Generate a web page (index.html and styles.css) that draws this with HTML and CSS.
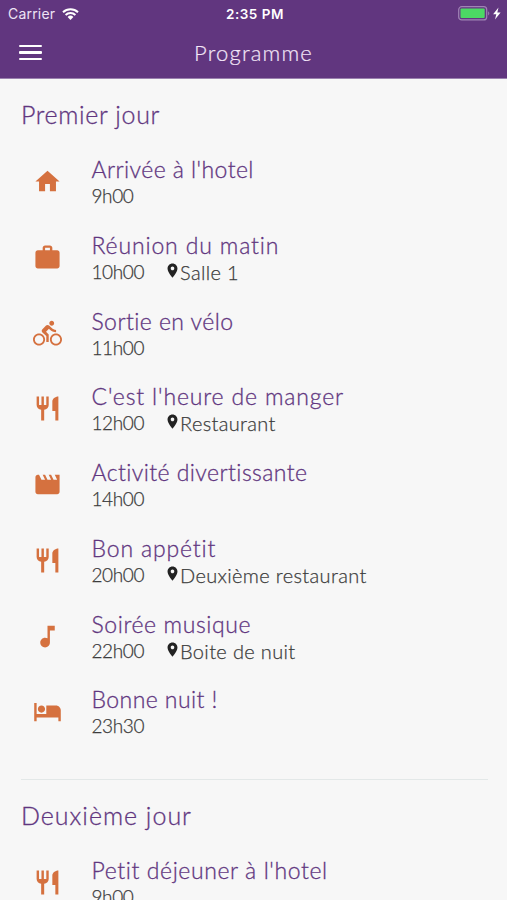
FILE: index.html
```
<!DOCTYPE html>
<html lang="fr">
<head>
    <meta charset="UTF-8">
    <meta name="viewport" content="width=device-width, initial-scale=1.0">
    <title>Programme</title>
    <link rel="stylesheet" href="styles.css">
</head>
<body>
    <svg class="sprite" aria-hidden="true">
        <symbol id="home" viewBox="0 0 24 24"><path d="M10 20v-6h4v6h5v-8h3L12 3 2 12h3v8z"/></symbol>
        <symbol id="work" viewBox="0 0 24 24"><path d="M20 6h-4V4c0-1.11-.89-2-2-2h-4c-1.11 0-2 .89-2 2v2H4c-1.11 0-1.99.89-1.99 2L2 19c0 1.11.89 2 2 2h16c1.11 0 2-.89 2-2V8c0-1.11-.89-2-2-2zm-6 0h-4V4h4v2z"/></symbol>
        <symbol id="bike" viewBox="0 0 24 24"><path d="M15.5 5.5c1.1 0 2-.9 2-2s-.9-2-2-2-2 .9-2 2 .9 2 2 2zM5 12c-2.8 0-5 2.2-5 5s2.2 5 5 5 5-2.2 5-5-2.2-5-5-5zm0 8.5c-1.9 0-3.5-1.6-3.5-3.5s1.6-3.5 3.5-3.5 3.5 1.6 3.5 3.5-1.6 3.5-3.5 3.5zm5.8-10l2.4-2.4.8.8c1.3 1.3 3 2.1 5.1 2.1V9c-1.5 0-2.7-.6-3.6-1.5l-1.9-1.9c-.5-.4-1-.6-1.6-.6s-1.1.2-1.4.6L7.8 8.4c-.4.4-.6.9-.6 1.4 0 .6.2 1.1.6 1.4L11 14v5h2v-6.2l-2.2-2.3zM19 12c-2.8 0-5 2.2-5 5s2.2 5 5 5 5-2.2 5-5-2.2-5-5-5zm0 8.5c-1.9 0-3.5-1.6-3.5-3.5s1.6-3.5 3.5-3.5 3.5 1.6 3.5 3.5-1.6 3.5-3.5 3.5z"/></symbol>
        <symbol id="restaurant" viewBox="0 0 24 24"><path d="M11 9H9V2H7v7H5V2H3v7c0 2.12 1.66 3.84 3.75 3.97V22h2.5v-9.03C11.34 12.84 13 11.12 13 9V2h-2v7zm5-3v8h2.5v8H21V2c-2.76 0-5 2.24-5 4z"/></symbol>
        <symbol id="movie" viewBox="0 0 24 24"><path d="M18 4l2 4h-3l-2-4h-2l2 4h-3l-2-4H8l2 4H7L5 4H4c-1.1 0-1.99.9-1.99 2L2 18c0 1.1.9 2 2 2h16c1.1 0 2-.9 2-2V4h-4z"/></symbol>
        <symbol id="music" viewBox="0 0 24 24"><path d="M12 3v10.55c-.59-.34-1.27-.55-2-.55-2.21 0-4 1.79-4 4s1.79 4 4 4 4-1.79 4-4V7h4V3h-6z"/></symbol>
        <symbol id="hotel" viewBox="0 0 24 24"><path d="M7 13c1.66 0 3-1.34 3-3S8.66 7 7 7s-3 1.34-3 3 1.34 3 3 3zm12-6h-8v7H3V5H1v15h2v-3h18v3h2v-9c0-2.21-1.79-4-4-4z"/></symbol>
        <symbol id="place" viewBox="0 0 24 24"><path d="M12 2C8.13 2 5 5.13 5 9c0 5.25 7 13 7 13s7-7.75 7-13c0-3.87-3.13-7-7-7zm0 9.5c-1.38 0-2.5-1.12-2.5-2.5s1.12-2.5 2.5-2.5 2.5 1.12 2.5 2.5-1.12 2.5-2.5 2.5z"/></symbol>
    </svg>

    <header class="header">
        <div class="status-bar">
            <div class="carrier">
                <span>Carrier</span>
                <svg class="wifi" viewBox="0 0 17 12">
                    <path d="M1 4.2a10.8 10.8 0 0 1 15 0M3.6 7a7 7 0 0 1 9.8 0" fill="none" stroke="#fff" stroke-width="2"/>
                    <path d="M8.5 12L5.6 9a4.2 4.2 0 0 1 5.8 0z" fill="#fff"/>
                </svg>
            </div>
            <span class="clock">2:35 PM</span>
            <svg class="battery" viewBox="0 0 44 15">
                <rect x=".7" y=".7" width="28" height="13.2" rx="3" fill="none" stroke="#a084b5" stroke-width="1.2"/>
                <rect x="2.5" y="2.6" width="24.2" height="9.3" rx="1" fill="#4cd964"/>
                <path d="M30.2 5.2q2.2 2.1 0 4.2z" fill="#a084b5"/>
                <path d="M40.5 1.5l-5.4 6.8h3.2L37 13.5l5.6-7h-3.3z" fill="#fff"/>
            </svg>
        </div>
        <div class="nav-bar">
            <button class="menu" aria-label="Menu"><span></span><span></span><span></span></button>
            <h1 class="title">Programme</h1>
        </div>
    </header>

    <main class="content">
        <section class="day">
            <h2 class="day-title">Premier jour</h2>
            <div class="event">
                <svg class="icon"><use href="#home"/></svg>
                <div>
                    <h3 class="event-name tight">Arrivée à l'hotel</h3>
                    <p class="event-info"><span class="time">9h00</span></p>
                </div>
            </div>
            <div class="event">
                <svg class="icon"><use href="#work"/></svg>
                <div>
                    <h3 class="event-name wide">Réunion du matin</h3>
                    <p class="event-info"><span class="time">10h00</span><svg class="pin"><use href="#place"/></svg><span class="place">Salle 1</span></p>
                </div>
            </div>
            <div class="event">
                <svg class="icon"><use href="#bike"/></svg>
                <div>
                    <h3 class="event-name tight">Sortie en vélo</h3>
                    <p class="event-info"><span class="time">11h00</span></p>
                </div>
            </div>
            <div class="event">
                <svg class="icon"><use href="#restaurant"/></svg>
                <div>
                    <h3 class="event-name wide">C'est l'heure de manger</h3>
                    <p class="event-info"><span class="time">12h00</span><svg class="pin"><use href="#place"/></svg><span class="place">Restaurant</span></p>
                </div>
            </div>
            <div class="event">
                <svg class="icon"><use href="#movie"/></svg>
                <div>
                    <h3 class="event-name tight">Activité divertissante</h3>
                    <p class="event-info"><span class="time">14h00</span></p>
                </div>
            </div>
            <div class="event">
                <svg class="icon"><use href="#restaurant"/></svg>
                <div>
                    <h3 class="event-name wide">Bon appétit</h3>
                    <p class="event-info"><span class="time">20h00</span><svg class="pin"><use href="#place"/></svg><span class="place">Deuxième restaurant</span></p>
                </div>
            </div>
            <div class="event">
                <svg class="icon"><use href="#music"/></svg>
                <div>
                    <h3 class="event-name">Soirée musique</h3>
                    <p class="event-info"><span class="time">22h00</span><svg class="pin"><use href="#place"/></svg><span class="place">Boite de nuit</span></p>
                </div>
            </div>
            <div class="event">
                <svg class="icon"><use href="#hotel"/></svg>
                <div>
                    <h3 class="event-name tight">Bonne nuit !</h3>
                    <p class="event-info"><span class="time">23h30</span></p>
                </div>
            </div>
        </section>
        <section class="day">
            <h2 class="day-title wide">Deuxième jour</h2>
            <div class="event">
                <svg class="icon"><use href="#restaurant"/></svg>
                <div>
                    <h3 class="event-name">Petit déjeuner à l'hotel</h3>
                    <p class="event-info"><span class="time">9h00</span></p>
                </div>
            </div>
        </section>
    </main>
</body>
</html>
```
FILE: styles.css
```
* {
    box-sizing: border-box;
    margin: 0;
    padding: 0;
}

body {
    height: 900px;
    overflow: hidden;
    display: flex;
    flex-direction: column;
    background-color: #f7f7f7;
    color: #3c3c3c;
    font-family: "Century Gothic", Lato, sans-serif;
}

h1, h2, h3 {
    font-weight: 300;
}

.sprite {
    display: none;
}

.header {
    flex: none;
    height: 79px;
    background-color: #61367f;
    border-bottom: 1px solid #9a80ae;
    color: #fff;
}

.status-bar {
    display: grid;
    grid-template-columns: 1fr auto 1fr;
    align-items: center;
    height: 27px;
    padding: 0 5px 0 8px;
    font-family: Inter, sans-serif;
    font-size: 14px;
}

.carrier {
    display: flex;
    align-items: center;
    gap: 7px;
    color: #eee3f5;
    letter-spacing: 0.2px;
}

.wifi {
    width: 17px;
    height: 12px;
}

.clock {
    font-size: 13.5px;
    font-weight: 600;
    letter-spacing: 0.5px;
}

.battery {
    justify-self: end;
    width: 44px;
    height: 15px;
}

.nav-bar {
    display: grid;
    grid-template-columns: 60px 1fr 60px;
    align-items: center;
    height: 51px;
}

.menu {
    display: flex;
    flex-direction: column;
    gap: 4px;
    width: 42px;
    padding-left: 19px;
    border: none;
    background: none;
}

.menu span {
    height: 2.5px;
    border-radius: 1px;
    background-color: #fff;
}

.title {
    color: #f3e6f8;
    font-size: 22px;
    line-height: 28px;
    letter-spacing: 1.2px;
    text-align: center;
    -webkit-text-stroke: 0.2px;
}

.content {
    flex: 1;
    padding: 0 19px 0 21px;
}

.day + .day {
    margin-top: 15.5px;
    border-top: 1px solid #e3e8e8;
}

.day-title {
    height: 78px;
    padding-top: 19px;
    color: #61367f;
    font-size: 25px;
    line-height: 32px;
    letter-spacing: 0.65px;
    -webkit-text-stroke: 0.3px;
}

.event {
    display: flex;
    gap: 30px;
    height: 75.75px;
    padding-left: 11.5px;
}

.event-name {
    margin-top: -1px;
    color: #61367f;
    font-size: 23px;
    line-height: 27px;
    letter-spacing: 0.6px;
    white-space: nowrap;
    -webkit-text-stroke: 0.3px;
}

.tight {
    letter-spacing: 0.43px;
}

.wide {
    letter-spacing: 0.85px;
}

.day-title.wide {
    letter-spacing: 1px;
}

.icon {
    flex: none;
    width: 29px;
    height: 29px;
    margin-top: 10px;
    fill: #d5713f;
}

.event-info {
    display: flex;
    align-items: center;
    font-size: 19px;
    font-weight: 300;
    line-height: 26px;
    white-space: nowrap;
    -webkit-text-stroke: 0.25px;
}

.time {
    letter-spacing: -0.4px;
}

.place {
    font-size: 20px;
    letter-spacing: 0.35px;
}

.pin {
    width: 17px;
    height: 17px;
    margin: -3px -1px 0 20px;
    fill: #222;
}
```
